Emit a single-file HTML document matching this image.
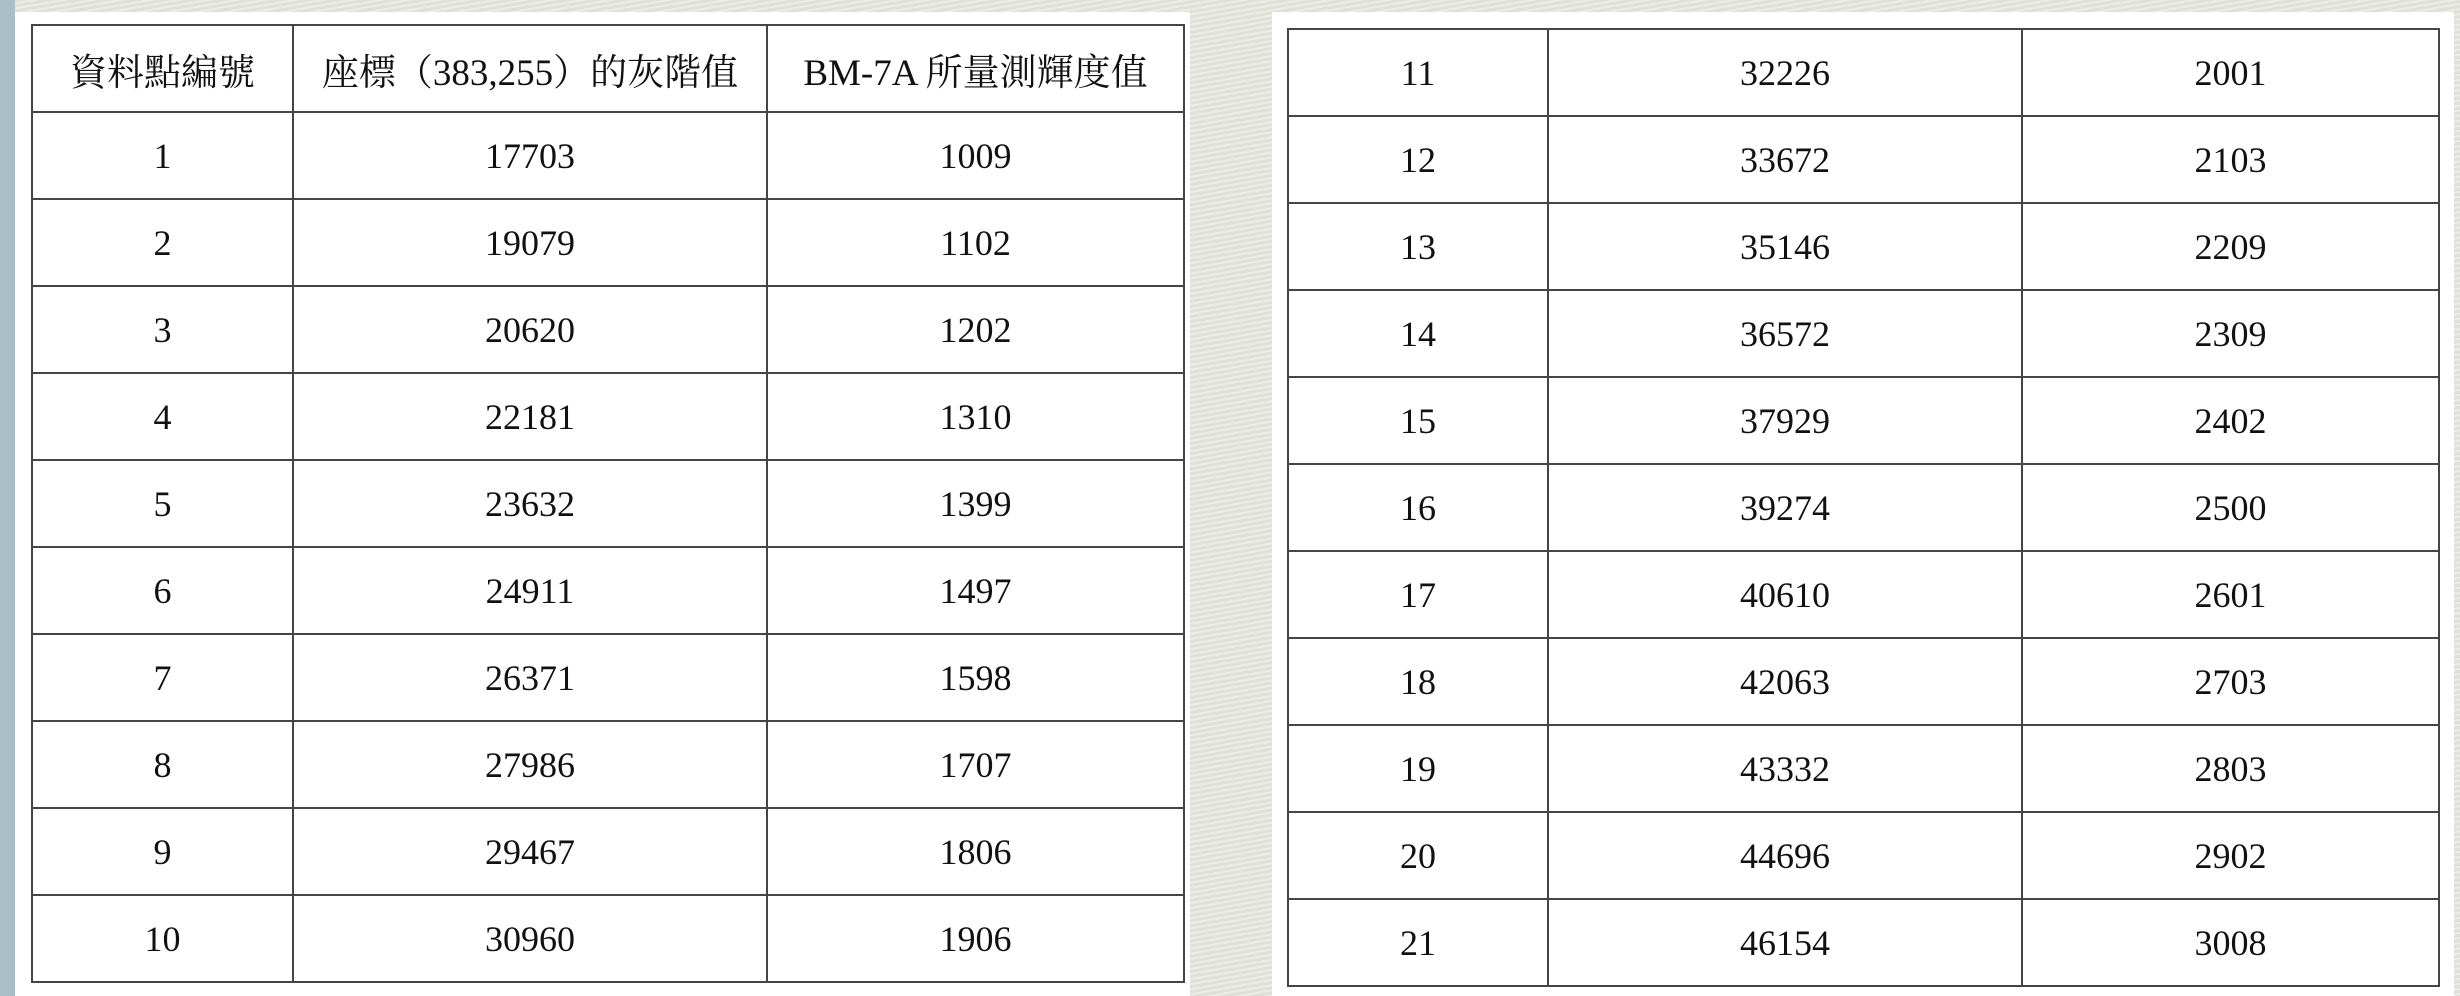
<!DOCTYPE html>
<html><head><meta charset="utf-8"><style>
html,body{margin:0;padding:0}
body{width:2460px;height:996px;position:relative;overflow:hidden;background:#e6e7dd;
background-image:repeating-linear-gradient(170deg,rgba(255,255,255,.25) 0 2px,rgba(0,0,0,.03) 2px 5px);}
.strip{position:absolute;left:0;top:0;width:15px;height:996px;background:#a9bfc6}
.panel{position:absolute;background:#fff}
table{position:absolute;border-collapse:collapse;table-layout:fixed;
font-family:"Liberation Serif","Noto Serif CJK SC",serif;font-size:36px;color:#111}
td{border:2px solid #454545;text-align:center;height:85px;padding:0;vertical-align:middle;box-sizing:border-box}
tr{height:87px}
.h td{font-size:37px}
</style></head><body>
<div class="strip"></div>
<div class="panel" style="left:15px;top:12px;width:1175px;height:984px"></div>
<div class="panel" style="left:1272px;top:12px;width:1182px;height:984px"></div>
<table style="left:31px;top:24px;width:1152px">
<colgroup><col style="width:261px"><col style="width:474px"><col style="width:417px"></colgroup>
<tr class="h"><td>資料點編號</td><td>座標（383,255）的灰階值</td><td>BM-7A 所量測輝度值</td></tr>
<tr><td>1</td><td>17703</td><td>1009</td></tr>
<tr><td>2</td><td>19079</td><td>1102</td></tr>
<tr><td>3</td><td>20620</td><td>1202</td></tr>
<tr><td>4</td><td>22181</td><td>1310</td></tr>
<tr><td>5</td><td>23632</td><td>1399</td></tr>
<tr><td>6</td><td>24911</td><td>1497</td></tr>
<tr><td>7</td><td>26371</td><td>1598</td></tr>
<tr><td>8</td><td>27986</td><td>1707</td></tr>
<tr><td>9</td><td>29467</td><td>1806</td></tr>
<tr><td>10</td><td>30960</td><td>1906</td></tr>
</table>
<table style="left:1287px;top:28px;width:1151px">
<colgroup><col style="width:260px"><col style="width:474px"><col style="width:417px"></colgroup>
<tr><td>11</td><td>32226</td><td>2001</td></tr>
<tr><td>12</td><td>33672</td><td>2103</td></tr>
<tr><td>13</td><td>35146</td><td>2209</td></tr>
<tr><td>14</td><td>36572</td><td>2309</td></tr>
<tr><td>15</td><td>37929</td><td>2402</td></tr>
<tr><td>16</td><td>39274</td><td>2500</td></tr>
<tr><td>17</td><td>40610</td><td>2601</td></tr>
<tr><td>18</td><td>42063</td><td>2703</td></tr>
<tr><td>19</td><td>43332</td><td>2803</td></tr>
<tr><td>20</td><td>44696</td><td>2902</td></tr>
<tr><td>21</td><td>46154</td><td>3008</td></tr>
</table>
</body></html>
